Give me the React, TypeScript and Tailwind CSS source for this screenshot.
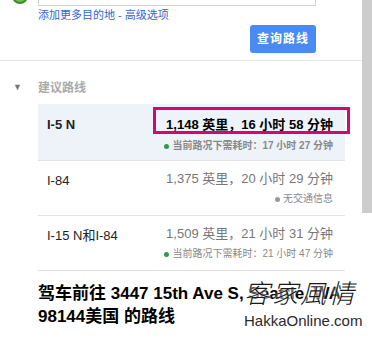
const routes = [
  {
    name: 'I-5 N',
    distance: '1,148 英里，16 小时 58 分钟',
    note: '当前路况下需耗时：17 小时 27 分钟',
    live: true,
    selected: true,
  },
  {
    name: 'I-84',
    distance: '1,375 英里，20 小时 29 分钟',
    note: '无交通信息',
    live: false,
    selected: false,
  },
  {
    name: 'I-15 N和I-84',
    distance: '1,509 英里，21 小时 31 分钟',
    note: '当前路况下需耗时：21 小时 47 分钟',
    live: true,
    selected: false,
  },
]

const font = { fontFamily: '"Liberation Sans", Arial, "Noto Sans CJK SC", sans-serif' }

export default function App() {
  return (
    <div className="flex h-[343px] w-[372px] overflow-hidden bg-white" style={font}>
      <div className="relative w-[362px]">
        {/* top of the destination form */}
        <div className="relative h-[61px] border-b border-[#e5e5e5]">
          <div className="absolute left-[12px] top-[-12px] h-[16px] w-[16px] rounded-full border-2 border-[#3c8a2e] bg-[#6bbf4e]" />
          <div className="absolute left-[38px] top-[-20px] h-[26px] w-[278px] border border-[#d4d4d4] bg-white" />
          <div className="absolute left-[38px] top-[8px] text-[11px] leading-[14px] text-[#3366cc]">
            添加更多目的地 - 高级选项
          </div>
          <button className="absolute left-[250px] top-[25px] h-[28px] w-[66px] rounded-[3px] bg-[#4a8af4] text-[12px] font-bold tracking-[1px] text-white">
            查询路线
          </button>
        </div>

        <div className="flex h-[43px] items-center pt-[11px]">
          <span className="w-[38px] pl-[13px] text-[9px] text-[#777]">▼</span>
          <span className="text-[12px] font-bold text-[#aaa]">建议路线</span>
        </div>

        <div className="ml-[38px] w-[307px]">
          {routes.map((r) => (
            <div
              key={r.name}
              className={`relative flex h-[55px] border-b border-[#e3e3e3] pl-[9px] pr-[12px] ${
                r.selected ? 'h-[57px] bg-[#eef3fa]' : ''
              }`}
            >
              <div className={`flex-1 pt-[12px] text-[13px] leading-[16px] text-[#222] ${r.selected ? 'pt-[13px] font-bold' : ''}`}>
                {r.name}
              </div>
              <div className="flex flex-col items-end pt-[10px]">
                <div className={`text-[13px] leading-[16px] ${r.selected ? 'pt-[3px] font-bold text-black' : 'text-[#777]'}`}>
                  {r.distance}
                </div>
                <div className={`mt-[5px] flex items-center gap-[3px] text-[10px] leading-[14px] ${r.selected ? 'mt-[6px] font-bold text-[#888]' : 'text-[#888]'}`}>
                  <span
                    className={`inline-block h-[5px] w-[5px] rounded-full ${r.live ? 'bg-[#2f9a4a]' : 'bg-[#999]'}`}
                  />
                  {r.note}
                </div>
              </div>
              {r.selected && (
                <div className="absolute left-[115px] top-[3px] h-[27px] w-[197px] border-[3px] border-[#cc0b70]" />
              )}
            </div>
          ))}
        </div>

        <div className="ml-[38px] mt-[11px] w-[320px] text-[17px] font-bold leading-[23px] text-black">
          驾车前往 3447 15th Ave S, Seattle, WA 98144美国 的路线
        </div>

        {/* watermark */}
        <div className="absolute left-[244px] top-[277px] w-[118px]">
          <div
            className="text-[26px] italic leading-[30px] tracking-[2px] text-[#1a1a1a]"
            style={{ fontFamily: '"Noto Sans CJK TC", serif', fontWeight: 300, textShadow: '0 0 3px #fff, 0 0 3px #fff' }}
          >
            客家風情
          </div>
          <div className="mt-[5px] text-[15px] leading-[18px] text-[#2a2a2a]">
            HakkaOnline.com
          </div>
        </div>
      </div>

      <div className="w-[10px]">
        <div className="h-[213px] bg-[#cdcdcd]" />
      </div>
    </div>
  )
}
